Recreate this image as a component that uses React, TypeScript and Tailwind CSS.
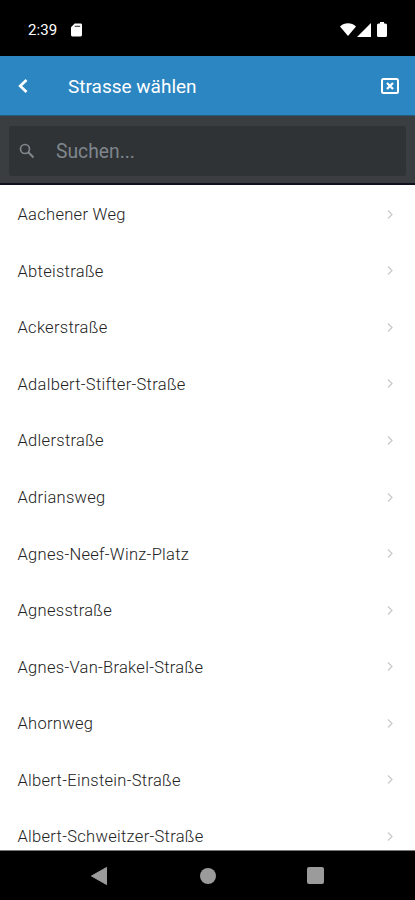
import { ReactNode } from "react";

const streets = [
  "Aachener Weg",
  "Abteistraße",
  "Ackerstraße",
  "Adalbert-Stifter-Straße",
  "Adlerstraße",
  "Adriansweg",
  "Agnes-Neef-Winz-Platz",
  "Agnesstraße",
  "Agnes-Van-Brakel-Straße",
  "Ahornweg",
  "Albert-Einstein-Straße",
  "Albert-Schweitzer-Straße",
];

function StatusBar() {
  return (
    <div className="flex h-14 shrink-0 items-center bg-black pl-7 pr-7 pt-[3px] text-white">
      <span className="w-[42.500px] text-[15px] leading-5 tracking-[0.1px]">2:39</span>
      <svg className="h-[14px] w-[11px]" viewBox="0 0 12 14" fill="currentColor">
        <path d="M4 0h6.500A1.500 1.500 0 0 1 12 1.500v11a1.500 1.500 0 0 1-1.500 1.500h-9A1.500 1.500 0 0 1 0 12.500V4z" />
        <path d="M4 3h6" stroke="#555" strokeWidth="1.400" />
      </svg>
      <div className="ml-auto flex items-center">
        <svg className="mr-[1px] h-[13px] w-4" viewBox="0 0 16 13" fill="currentColor">
          <path d="M8 13 0 3.500C4.500-.8 11.500-.8 16 3.500z" />
        </svg>
        <svg className="mr-[6px] h-[14px] w-[14px]" viewBox="0 0 14 14" fill="currentColor">
          <path d="M14 0v14H0z" />
        </svg>
        <svg className="h-[15px] w-[10px]" viewBox="0 0 10 15" fill="currentColor">
          <path d="M3 0h4v1.500h1.500A1.500 1.500 0 0 1 10 3v10.500a1.500 1.500 0 0 1-1.500 1.500h-7A1.500 1.500 0 0 1 0 13.500V3a1.500 1.500 0 0 1 1.500-1.500H3z" />
        </svg>
      </div>
    </div>
  );
}

function Header({ children }: { children: ReactNode }) {
  return (
    <header className="flex h-[60px] shrink-0 items-center border-b border-[#245b7c] bg-[#2c86c2] pl-[18px] pr-4 text-white">
      <button aria-label="Zurück" className="w-[50px]">
        <svg className="h-[14px] w-[10px]" viewBox="0 0 10 14" fill="none" stroke="currentColor" strokeWidth="2.700">
          <path d="M8.500 1 2.200 7l6.300 6" />
        </svg>
      </button>
      <h1 className="pt-[3px] text-[19px] leading-6">{children}</h1>
      <button aria-label="Schließen" className="ml-auto">
        <svg className="h-4 w-[18px]" viewBox="0 0 18 16" fill="none" stroke="currentColor">
          <rect x="1" y="1" width="16" height="14" rx="1.500" strokeWidth="2" />
          <path d="m6 5 6 6m0-6-6 6" strokeWidth="2.200" />
        </svg>
      </button>
    </header>
  );
}

function SearchBar() {
  return (
    <div className="h-[69px] shrink-0 border-b-2 border-[#12101f] bg-[#3a3e40] px-[9px] pt-[10px]">
      <div className="flex h-[50px] items-center rounded-[3px] bg-[#2f3336] pl-[10px] text-[#7f868c]">
        <svg className="h-4 w-4" viewBox="0 0 16 16" fill="none" stroke="currentColor" strokeWidth="1.700">
          <circle cx="6" cy="6" r="4.500" />
          <path d="m9.300 9.300 5.200 5.200" strokeWidth="2" />
        </svg>
        <span className="ml-[21px] pt-[2px] text-[19.300px] leading-6">Suchen...</span>
      </div>
    </div>
  );
}

export default function App() {
  return (
    <div className="flex h-[900px] w-[415px] flex-col overflow-hidden bg-white font-['Roboto',sans-serif]">
      <StatusBar />
      <Header>Strasse wählen</Header>
      <SearchBar />

      {/* Street list */}
      <ul className="min-h-0 flex-1 overflow-hidden border-b border-[#777] pt-[2px]">
        {streets.map((street) => (
          <li key={street} className="flex h-[56.550px] items-center justify-between pl-[17.500px] pr-[22px]">
            <span className="text-[16.500px] font-light leading-5 tracking-[0.290px] text-[#222]">{street}</span>
            <svg className="mb-[2px] h-[9px] w-[6px]" viewBox="0 0 6 9" fill="none" stroke="#c8c8c8" strokeWidth="1.200">
              <path d="m1 .5 4 4-4 4" />
            </svg>
          </li>
        ))}
      </ul>

      {/* Android navigation */}
      <nav className="flex h-[49px] shrink-0 items-center bg-black pl-[91px] text-[#9b9b9b]">
        <svg className="h-[18px] w-4" viewBox="0 0 16 18" fill="currentColor">
          <path d="M15.500.5v17L.5 9z" strokeLinejoin="round" stroke="currentColor" />
        </svg>
        <span className="ml-[93px] h-4 w-4 rounded-full bg-[#9b9b9b]" />
        <span className="ml-[91px] h-[17px] w-[17px] rounded-[2px] bg-[#9b9b9b]" />
      </nav>
    </div>
  );
}
